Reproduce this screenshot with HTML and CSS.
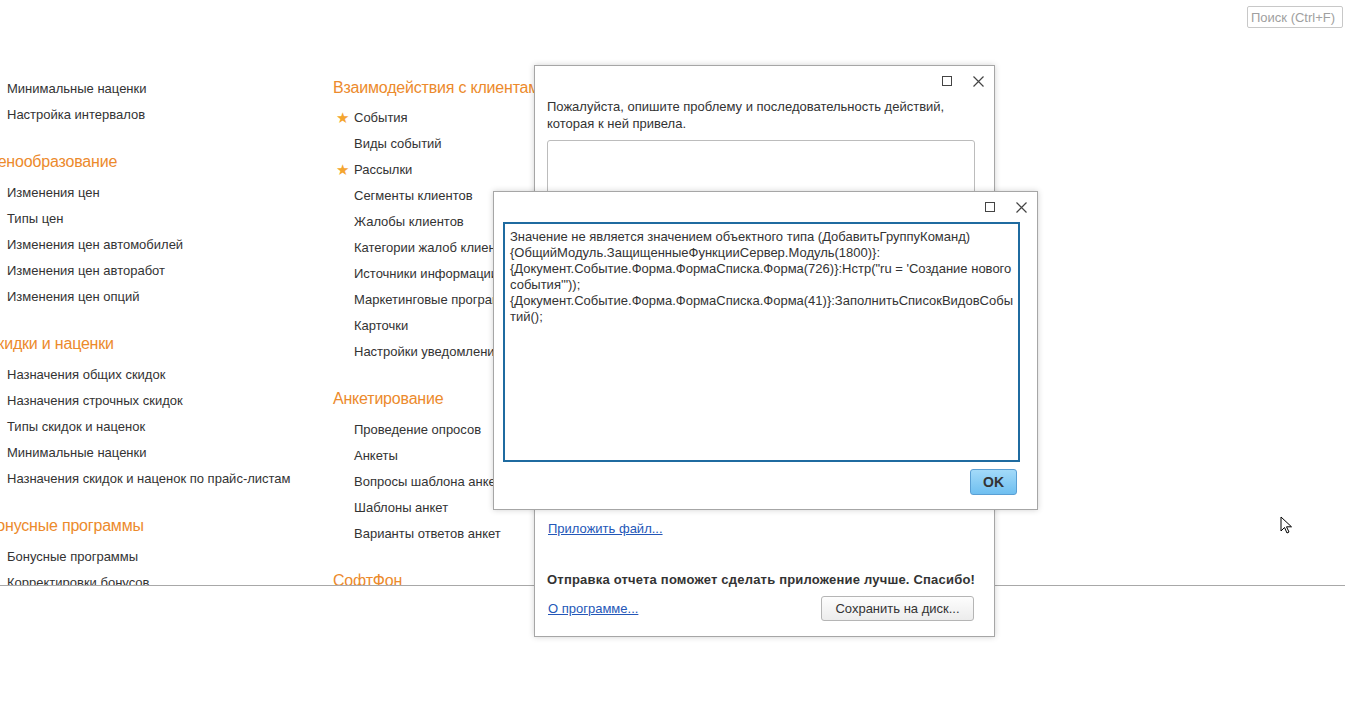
FILE: index.html
```html
<!DOCTYPE html>
<html lang="ru">
<head>
    <meta charset="UTF-8">
    <meta name="viewport" content="width=device-width, initial-scale=1.0">
    <title>Взаимодействия с клиентами</title>
    <link rel="stylesheet" href="styles.css">
</head>
<body>
<div class="topbar">
    <input type="text" class="search" placeholder="Поиск (Ctrl+F)">
</div>

<div class="workspace">
    <div class="columns">
        <!-- Левая колонка (прокручена) -->
        <div class="col">
            <div class="group first">
                <div class="item">Минимальные наценки</div>
                <div class="item">Настройка интервалов</div>
            </div>
            <div class="group">
                <div class="group-title">Ценообразование</div>
                <div class="item">Изменения цен</div>
                <div class="item">Типы цен</div>
                <div class="item">Изменения цен автомобилей</div>
                <div class="item">Изменения цен авторабот</div>
                <div class="item">Изменения цен опций</div>
            </div>
            <div class="group">
                <div class="group-title">Скидки и наценки</div>
                <div class="item">Назначения общих скидок</div>
                <div class="item">Назначения строчных скидок</div>
                <div class="item">Типы скидок и наценок</div>
                <div class="item">Минимальные наценки</div>
                <div class="item">Назначения скидок и наценок по прайс-листам</div>
            </div>
            <div class="group">
                <div class="group-title">Бонусные программы</div>
                <div class="item">Бонусные программы</div>
                <div class="item">Корректировки бонусов</div>
                <div class="item">Начисления бонусов</div>
            </div>
        </div>

        <!-- Средняя колонка -->
        <div class="col">
            <div class="group first">
                <div class="group-title">Взаимодействия с клиентами</div>
                <div class="item"><span class="star">★</span>События</div>
                <div class="item">Виды событий</div>
                <div class="item"><span class="star">★</span>Рассылки</div>
                <div class="item">Сегменты клиентов</div>
                <div class="item">Жалобы клиентов</div>
                <div class="item">Категории жалоб клиентов</div>
                <div class="item">Источники информации</div>
                <div class="item">Маркетинговые программы</div>
                <div class="item">Карточки</div>
                <div class="item">Настройки уведомлений</div>
            </div>
            <div class="group">
                <div class="group-title">Анкетирование</div>
                <div class="item">Проведение опросов</div>
                <div class="item">Анкеты</div>
                <div class="item">Вопросы шаблона анкет</div>
                <div class="item">Шаблоны анкет</div>
                <div class="item">Варианты ответов анкет</div>
            </div>
            <div class="group">
                <div class="group-title">СофтФон</div>
                <div class="item">Настройки</div>
            </div>
        </div>
    </div>
</div>

<!-- Окно отчета об ошибке -->
<div class="dialog report">
    <div class="dialog-head">
        <span class="btn-max"></span>
        <svg class="btn-close" width="11" height="11" viewBox="0 0 11 11">
            <path d="M0.5 0.5 L10.5 10.5 M10.5 0.5 L0.5 10.5" stroke="#444" stroke-width="1.2" fill="none"/>
        </svg>
    </div>
    <div class="report-body">
        <p class="hint">Пожалуйста, опишите проблему и последовательность действий, которая к ней привела.</p>
        <div class="memo"></div>
        <a href="#" class="link attach">Приложить файл...</a>
        <p class="thanks">Отправка отчета поможет сделать приложение лучше. Спасибо!</p>
        <div class="report-foot">
            <a href="#" class="link">О программе...</a>
            <button class="btn-save">Сохранить на диск...</button>
        </div>
    </div>
</div>

<!-- Окно с текстом ошибки -->
<div class="dialog error">
    <div class="dialog-head">
        <span class="btn-max"></span>
        <svg class="btn-close" width="11" height="11" viewBox="0 0 11 11">
            <path d="M0.5 0.5 L10.5 10.5 M10.5 0.5 L0.5 10.5" stroke="#444" stroke-width="1.2" fill="none"/>
        </svg>
    </div>
    <div class="error-body">
        <div class="error-text">Значение не является значением объектного типа (ДобавитьГруппуКоманд)<br>{ОбщийМодуль.ЗащищенныеФункцииСервер.Модуль(1800)}:<br>{Документ.Событие.Форма.ФормаСписка.Форма(726)}:Нстр("ru = 'Создание нового<br>события'"));<br>{Документ.Событие.Форма.ФормаСписка.Форма(41)}:ЗаполнитьСписокВидовСобы<br>тий();</div>
        <div class="error-foot">
            <button class="btn-ok">OK</button>
        </div>
    </div>
</div>

<svg class="cursor" width="13" height="19" viewBox="0 0 13 19">
    <path d="M1 1 L1 15 L4.5 11.5 L7 17 L9 16 L6.5 10.8 L11.5 10.8 Z" fill="#fff" stroke="#000" stroke-width="1"/>
</svg>
</body>
</html>
```

FILE: styles.css
```css
body {
    margin: 0;
    font-family: "Liberation Sans", Arial, sans-serif;
    font-size: 13px;
    color: #333;
    background: #fff;
    overflow: hidden;
}

.topbar {
    height: 34px;
    box-sizing: border-box;
    padding: 6px 2px 0 0;
    display: flex;
    justify-content: flex-end;
}

.search {
    width: 96px;
    height: 22px;
    box-sizing: border-box;
    border: 1px solid #c8c8c8;
    border-radius: 2px;
    padding: 0 3px;
    font-family: inherit;
    font-size: 13px;
    color: #333;
}
.search::placeholder {
    color: #a0a0a0;
}

.workspace {
    height: 552px;
    box-sizing: border-box;
    padding-top: 42px;
    overflow: hidden;
    border-bottom: 1px solid #a8a8a8;
}

.columns {
    display: flex;
    margin-left: -14px;
}

.col {
    width: 347px;
    flex-shrink: 0;
}

.group {
    margin-top: 22px;
}
.group.first {
    margin-top: 0;
}

.group-title {
    font-size: 16px;
    line-height: 24px;
    letter-spacing: -0.2px;
    color: #ec8a2c;
    margin-bottom: 6px;
    white-space: nowrap;
}
.group.first .group-title {
    margin-bottom: 5px;
}

.item {
    height: 26px;
    line-height: 26px;
    padding-left: 21px;
    position: relative;
    white-space: nowrap;
}

.star {
    position: absolute;
    left: 3px;
    top: 0;
    font-size: 15px;
    color: #f4a530;
}

/* Окна */
.dialog {
    position: absolute;
    background: #fff;
    border: 1px solid #a6a6a6;
    box-shadow: 0 0 6px rgba(0, 0, 0, 0.18);
    box-sizing: border-box;
}

.dialog-head {
    height: 30px;
    display: flex;
    align-items: center;
    justify-content: flex-end;
    padding-right: 10px;
}

.btn-max {
    width: 8px;
    height: 8px;
    border: 1px solid #444;
    margin-right: 21px;
}

.report {
    left: 534px;
    top: 65px;
    width: 461px;
    height: 572px;
}

.report-body {
    padding: 2px 19px 0 12px;
}

.hint {
    margin: 0;
    line-height: 17px;
    width: 410px;
}

.memo {
    margin-top: 8px;
    height: 300px;
    border: 1px solid #bcbcbc;
    border-radius: 3px;
}

.link {
    color: #2457b8;
    text-decoration: underline;
    line-height: 17px;
}

.attach {
    display: inline-block;
    margin-top: 78px;
    margin-left: 1px;
}

.thanks {
    margin: 34px 0 0 0;
    font-weight: bold;
    line-height: 17px;
    letter-spacing: 0.2px;
    white-space: nowrap;
}

.report-foot {
    margin-top: 7px;
    display: flex;
    align-items: center;
    justify-content: space-between;
    height: 26px;
}
.report-foot .link {
    margin-left: 1px;
}

.btn-save {
    height: 25px;
    width: 153px;
    margin-right: 1px;
    border: 1px solid #b5b5b5;
    border-radius: 3px;
    background: linear-gradient(#fdfdfd, #ececec);
    font-family: inherit;
    font-size: 13px;
    color: #333;
    padding: 0;
}

.error {
    left: 493px;
    top: 191px;
    width: 545px;
    height: 319px;
}

.error-body {
    padding: 0 17px 0 9px;
}

.error-text {
    height: 240px;
    box-sizing: border-box;
    border: 2px solid #1f6ba0;
    padding: 5px;
    line-height: 16px;
    white-space: nowrap;
}

.error-foot {
    margin-top: 7px;
    display: flex;
    justify-content: flex-end;
}

.btn-ok {
    width: 47px;
    height: 26px;
    margin-right: 3px;
    border: 1px solid #5a9fd4;
    border-radius: 3px;
    background: linear-gradient(#a3daf9, #6fbff0);
    font-family: inherit;
    font-size: 14px;
    font-weight: bold;
    color: #333;
    padding: 0;
}

.cursor {
    position: absolute;
    left: 1280px;
    top: 516px;
}
```
